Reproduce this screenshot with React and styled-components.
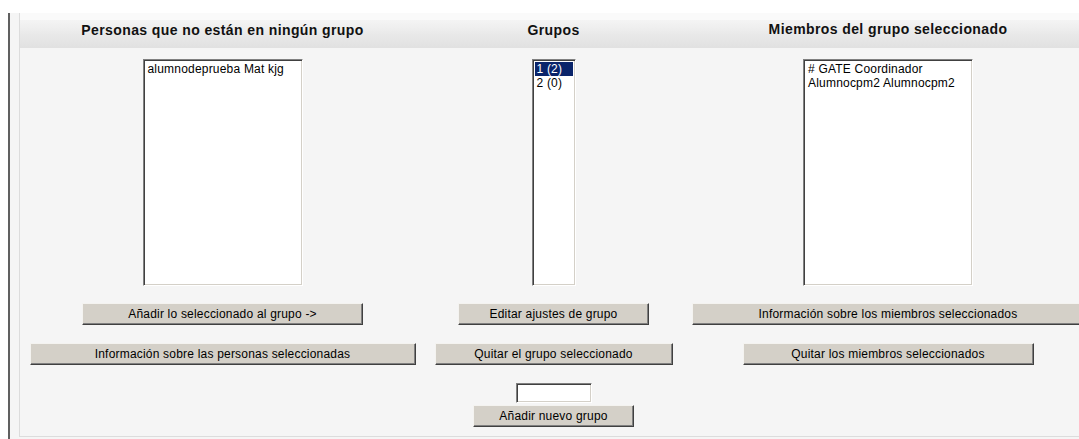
import React from 'react';
import styled, { createGlobalStyle } from 'styled-components';

const GlobalStyle = createGlobalStyle`
  html, body {
    margin: 0;
    padding: 0;
    background: #ffffff;
    overflow: hidden;
  }
  body {
    font-family: "Liberation Sans", Arial, sans-serif;
    color: #000;
  }
`;

const Frame = styled.div`
  margin: 13px 0 0 8px;
  height: 426px;
  border-left: 2px solid #606060;
  background: #f5f5f5;
  padding-left: 9px;
`;

const Panel = styled.div`
  border-left: 1px solid #dcdcdc;
  background: #fafafa;
  padding-top: 7px;
  width: 1074px;
`;

const Table = styled.div`
  display: grid;
  grid-template-columns: 405px 257px 412px;
  background: #f5f5f5;
  border-bottom: 1px solid #dcdcdc;
`;

const HeaderCell = styled.div`
  height: 28px;
  box-sizing: border-box;
  padding-top: ${(p) => (p.lift ? '0' : '1px')};
  text-align: center;
  font-weight: bold;
  font-size: 14px;
  line-height: 18px;
  letter-spacing: 0.4px;
  color: #111;
  background: linear-gradient(
    to bottom,
    #f4f4f4 0%,
    #eeeeee 30%,
    #e8e8e8 55%,
    #e1e1e1 100%
  );
`;

const Column = styled.div`
  display: flex;
  flex-direction: column;
  align-items: center;
  padding: 11px 0 9px;
`;

const ListBox = styled.div`
  width: ${(p) => p.width}px;
  height: 227px;
  box-sizing: border-box;
  background: #ffffff;
  border: 1px solid;
  border-color: #808080 #ffffff #ffffff #808080;
  box-shadow: inset 1px 1px 0 #404040, inset -1px -1px 0 #d4d0c8;
  padding: 2px 2px;
  margin-bottom: 17px;
  overflow: hidden;
`;

const Option = styled.div`
  font-size: 12px;
  line-height: 14px;
  letter-spacing: 0.2px;
  padding-left: 2px;
  white-space: nowrap;
  color: ${(p) => (p.selected ? '#ffffff' : '#000000')};
  background: ${(p) => (p.selected ? '#0a246a' : 'transparent')};
`;

const Button = styled.button`
  width: ${(p) => p.width}px;
  height: 22px;
  flex-shrink: 0;
  margin-bottom: ${(p) => p.gap ?? 18}px;
  padding: 0;
  font-family: "Liberation Sans", Arial, sans-serif;
  font-size: 12px;
  letter-spacing: 0.2px;
  color: #000;
  background: #d4d0c8;
  border: 1px solid;
  border-color: #f4f3f0 #404040 #404040 #f4f3f0;
  box-shadow: inset -1px -1px 0 #808080;
  cursor: default;
`;

const TextInput = styled.input`
  width: 76px;
  height: 20px;
  box-sizing: border-box;
  margin: 0 0 2px;
  background: #ffffff;
  border: 1px solid;
  border-color: #808080 #ffffff #ffffff #808080;
  box-shadow: inset 1px 1px 0 #404040, inset -1px -1px 0 #d4d0c8;
  outline: none;
`;

const people = ['alumnodeprueba Mat kjg'];
const groups = [
  { label: '1 (2)', selected: true },
  { label: '2 (0)' },
];
const members = ['# GATE Coordinador', 'Alumnocpm2 Alumnocpm2'];

export default function App() {
  return (
    <>
      <GlobalStyle />
      <Frame>
        <Panel>
          <Table>
            <HeaderCell>Personas que no están en ningún grupo</HeaderCell>
            <HeaderCell>Grupos</HeaderCell>
            <HeaderCell lift>Miembros del grupo seleccionado</HeaderCell>

            <Column>
              <ListBox width={160}>
                {people.map((p) => (
                  <Option key={p}>{p}</Option>
                ))}
              </ListBox>
              <Button width={281}>Añadir lo seleccionado al grupo -&gt;</Button>
              <Button width={386}>Información sobre las personas seleccionadas</Button>
            </Column>

            <Column>
              <ListBox width={44}>
                {groups.map((g) => (
                  <Option key={g.label} selected={g.selected}>
                    {g.label}
                  </Option>
                ))}
              </ListBox>
              <Button width={191}>Editar ajustes de grupo</Button>
              <Button width={238}>Quitar el grupo seleccionado</Button>
              <TextInput type="text" />
              <Button width={161} gap={0}>Añadir nuevo grupo</Button>
            </Column>

            <Column>
              <ListBox width={170}>
                {members.map((m) => (
                  <Option key={m}>{m}</Option>
                ))}
              </ListBox>
              <Button width={392}>Información sobre los miembros seleccionados</Button>
              <Button width={291}>Quitar los miembros seleccionados</Button>
            </Column>
          </Table>
        </Panel>
      </Frame>
    </>
  );
}
